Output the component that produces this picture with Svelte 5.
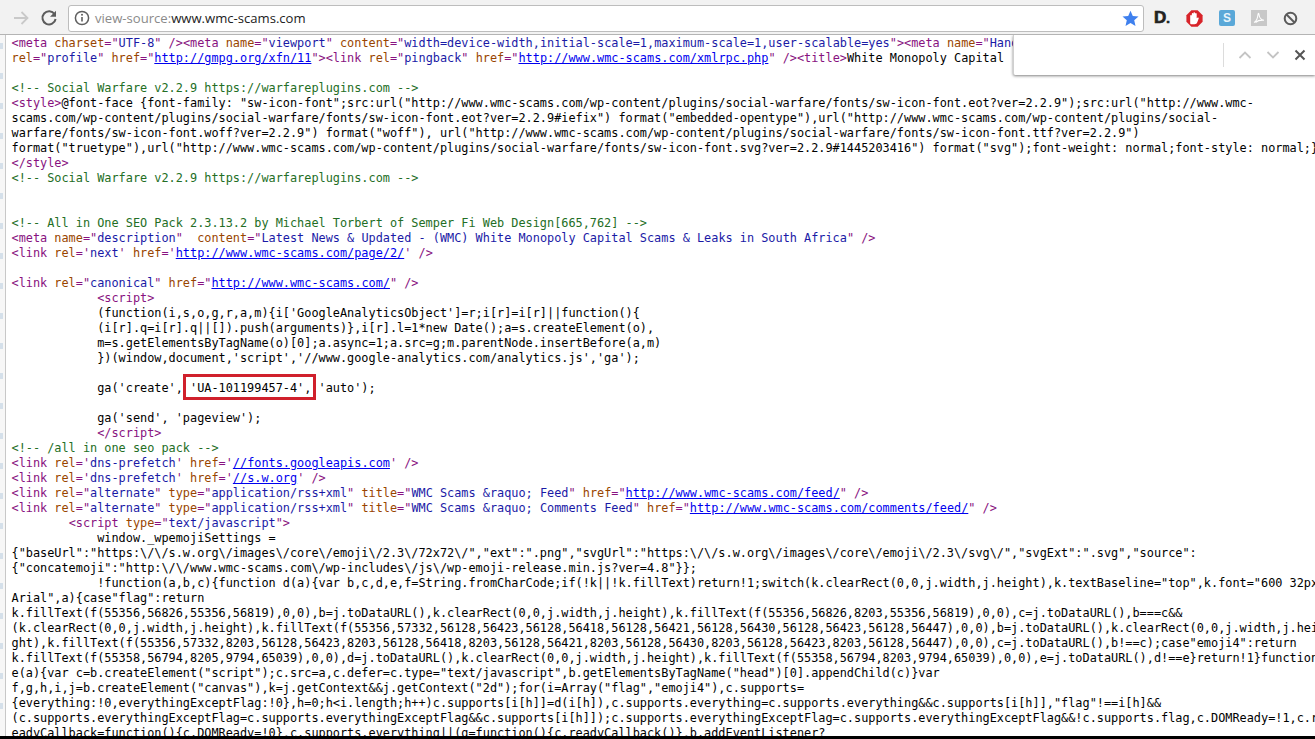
<script>
  const endScript = '<' + '/script>';
  const endStyle = '<' + '/style>';
  const MARK = " 'UA-101199457-4',";

  const source = String.raw`<meta charset="UTF-8" /><meta name="viewport" content="width=device-width,initial-scale=1,maximum-scale=1,user-scalable=yes"><meta name="HandheldFriendly" content="True">
rel="profile" href="http://gmpg.org/xfn/11"><link rel="pingback" href="http://www.wmc-scams.com/xmlrpc.php" /><title>White Monopoly Capital

<!-- Social Warfare v2.2.9 https://warfareplugins.com -->
<style>@font-face {font-family: "sw-icon-font";src:url("http://www.wmc-scams.com/wp-content/plugins/social-warfare/fonts/sw-icon-font.eot?ver=2.2.9");src:url("http://www.wmc-
scams.com/wp-content/plugins/social-warfare/fonts/sw-icon-font.eot?ver=2.2.9#iefix") format("embedded-opentype"),url("http://www.wmc-scams.com/wp-content/plugins/social-
warfare/fonts/sw-icon-font.woff?ver=2.2.9") format("woff"), url("http://www.wmc-scams.com/wp-content/plugins/social-warfare/fonts/sw-icon-font.ttf?ver=2.2.9")
format("truetype"),url("http://www.wmc-scams.com/wp-content/plugins/social-warfare/fonts/sw-icon-font.svg?ver=2.2.9#1445203416") format("svg");font-weight: normal;font-style: normal;}
${endStyle}
<!-- Social Warfare v2.2.9 https://warfareplugins.com -->


<!-- All in One SEO Pack 2.3.13.2 by Michael Torbert of Semper Fi Web Design[665,762] -->
<meta name="description"  content="Latest News & Updated - (WMC) White Monopoly Capital Scams & Leaks in South Africa" />
<link rel='next' href='http://www.wmc-scams.com/page/2/' />

<link rel="canonical" href="http://www.wmc-scams.com/" />
            <script>
            (function(i,s,o,g,r,a,m){i['GoogleAnalyticsObject']=r;i[r]=i[r]||function(){
            (i[r].q=i[r].q||[]).push(arguments)},i[r].l=1*new Date();a=s.createElement(o),
            m=s.getElementsByTagName(o)[0];a.async=1;a.src=g;m.parentNode.insertBefore(a,m)
            })(window,document,'script','//www.google-analytics.com/analytics.js','ga');

            ga('create', 'UA-101199457-4', 'auto');

            ga('send', 'pageview');
            ${endScript}
<!-- /all in one seo pack -->
<link rel='dns-prefetch' href='//fonts.googleapis.com' />
<link rel='dns-prefetch' href='//s.w.org' />
<link rel="alternate" type="application/rss+xml" title="WMC Scams &raquo; Feed" href="http://www.wmc-scams.com/feed/" />
<link rel="alternate" type="application/rss+xml" title="WMC Scams &raquo; Comments Feed" href="http://www.wmc-scams.com/comments/feed/" />
        <script type="text/javascript">
            window._wpemojiSettings =
{"baseUrl":"https:\/\/s.w.org\/images\/core\/emoji\/2.3\/72x72\/","ext":".png","svgUrl":"https:\/\/s.w.org\/images\/core\/emoji\/2.3\/svg\/","svgExt":".svg","source":
{"concatemoji":"http:\/\/www.wmc-scams.com\/wp-includes\/js\/wp-emoji-release.min.js?ver=4.8"}};
            !function(a,b,c){function d(a){var b,c,d,e,f=String.fromCharCode;if(!k||!k.fillText)return!1;switch(k.clearRect(0,0,j.width,j.height),k.textBaseline="top",k.font="600 32px
Arial",a){case"flag":return
k.fillText(f(55356,56826,55356,56819),0,0),b=j.toDataURL(),k.clearRect(0,0,j.width,j.height),k.fillText(f(55356,56826,8203,55356,56819),0,0),c=j.toDataURL(),b===c&&
(k.clearRect(0,0,j.width,j.height),k.fillText(f(55356,57332,56128,56423,56128,56418,56128,56421,56128,56430,56128,56423,56128,56447),0,0),b=j.toDataURL(),k.clearRect(0,0,j.width,j.hei
ght),k.fillText(f(55356,57332,8203,56128,56423,8203,56128,56418,8203,56128,56421,8203,56128,56430,8203,56128,56423,8203,56128,56447),0,0),c=j.toDataURL(),b!==c);case"emoji4":return
k.fillText(f(55358,56794,8205,9794,65039),0,0),d=j.toDataURL(),k.clearRect(0,0,j.width,j.height),k.fillText(f(55358,56794,8203,9794,65039),0,0),e=j.toDataURL(),d!==e}return!1}function
e(a){var c=b.createElement("script");c.src=a,c.defer=c.type="text/javascript",b.getElementsByTagName("head")[0].appendChild(c)}var
f,g,h,i,j=b.createElement("canvas"),k=j.getContext&&j.getContext("2d");for(i=Array("flag","emoji4"),c.supports=
{everything:!0,everythingExceptFlag:!0},h=0;h<i.length;h++)c.supports[i[h]]=d(i[h]),c.supports.everything=c.supports.everything&&c.supports[i[h]],"flag"!==i[h]&&
(c.supports.everythingExceptFlag=c.supports.everythingExceptFlag&&c.supports[i[h]]);c.supports.everythingExceptFlag=c.supports.everythingExceptFlag&&!c.supports.flag,c.DOMReady=!1,c.r
eadyCallback=function(){c.DOMReady=!0},c.supports.everything||(g=function(){c.readyCallback()},b.addEventListener?`.split('\n');

  // same colouring as the browser's view-source page
  function parseTag(tag) {
    const out = [];
    const re = /([\w-]+)=(["'])(.*?)\2/g;
    let last = 0;
    let m;
    while ((m = re.exec(tag))) {
      out.push({ kind: 'tag', text: tag.slice(last, m.index) });
      out.push({ kind: 'attr', text: m[1] });
      out.push({ kind: 'tag', text: '=' + m[2] });
      const isLink = m[1] === 'href' && /^(http|\/\/)/.test(m[3]);
      out.push({ kind: isLink ? 'link' : 'value', text: m[3] });
      out.push({ kind: 'tag', text: m[2] });
      last = m.index + m[0].length;
    }
    out.push({ kind: 'tag', text: tag.slice(last) });
    return out;
  }

  function parseLine(line) {
    const out = [];
    // ^rel= is the tail of a tag wrapped from the line above
    const re = /<!--.*?-->|<[^>]*>|^rel=[^>]*>/g;
    let last = 0;
    let m;
    const plain = (text) => {
      const at = text.indexOf(MARK);
      if (at < 0) {
        if (text) out.push({ kind: 'plain', text });
        return;
      }
      out.push({ kind: 'plain', text: text.slice(0, at) });
      out.push({ kind: 'mark', text: MARK });
      out.push({ kind: 'plain', text: text.slice(at + MARK.length) });
    };
    while ((m = re.exec(line))) {
      plain(line.slice(last, m.index));
      if (m[0].startsWith('<!--')) out.push({ kind: 'comment', text: m[0] });
      else out.push(...parseTag(m[0]));
      last = m.index + m[0].length;
    }
    plain(line.slice(last));
    return out;
  }

  const lines = source.map(parseLine);
  const ticks = [0, 1, 2, 3, 4, 5, 6, 7, 8, 9, 10, 11, 12, 13, 14, 15, 16, 17, 18, 19, 20, 21, 22];
</script>

<div class="page">
  <header class="toolbar">
    <div class="nav">
      <svg class="arrow" width="18" height="18" viewBox="0 0 18 18" fill="none" stroke="#c9c9c9" stroke-width="1.8">
        <path d="M2 9h13.5M9.5 3l6 6-6 6" />
      </svg>
      <svg class="reload" width="18" height="18" viewBox="0 0 18 18" fill="none">
        <path d="M14.6 5.2A6.6 6.6 0 1 0 15.6 10" stroke="#5c5c5c" stroke-width="2" />
        <path d="M16 1.8v6h-6z" fill="#5c5c5c" />
      </svg>
    </div>
    <div class="omnibox">
      <svg width="16" height="16" viewBox="0 0 16 16" fill="none">
        <circle cx="8" cy="8" r="6.6" stroke="#5f5f5f" stroke-width="1.5" />
        <path d="M8 7v4.6" stroke="#5f5f5f" stroke-width="1.6" />
        <circle cx="8" cy="4.8" r="1" fill="#5f5f5f" />
      </svg>
      <span class="url"><span class="scheme">view-source:</span>www.wmc-scams.com</span>
      <svg class="star" width="17" height="17" viewBox="0 0 17 17">
        <path d="M8.5.8l2.3 5.2 5.7.5-4.3 3.8 1.3 5.6-5-3-5 3 1.3-5.6L.5 6.500l5.700-.5z" fill="#3f80ee" />
      </svg>
    </div>
    <div class="extensions">
      <span class="ext-d">D<small>.</small></span>
      <svg width="17" height="17" viewBox="0 0 17 17">
        <path d="M5.400.3h6.200l5 5v6.400l-5 5H5.400l-5-5V5.300z" fill="#d8242a" />
        <path d="M4.200 13V5.800c0-1.200 1.600-1.200 1.600 0V3.900c0-1.200 1.600-1.200 1.600 0v-.8c0-1.200 1.700-1.200 1.700 0v.8c0-1.200 1.600-1.200 1.600 0v4.300c.9-1.200 2.300-.8 2 .4l-1.300 3.400c-.6 1.300-1.400 2.300-3 2.300H6.600c-1.400 0-2.400-.4-2.400-.9z" fill="#fff" />
      </svg>
      <span class="ext-s">S</span>
      <span class="ext-pdf">
        <svg width="12" height="12" viewBox="0 0 12 12" fill="none" stroke="#fff" stroke-width="1.100">
          <path d="M1 10.500c2-1 3.700-4.500 4-8 .1-1.500.9-1.500 1 0 .3 3 2.500 5.500 5 5.700-3-.2-6.500.5-8.500 2.300" />
        </svg>
      </span>
      <svg width="15" height="15" viewBox="0 0 15 15" fill="none" stroke="#5b5b5b" stroke-width="2">
        <circle cx="7.500" cy="7.500" r="5.800" />
        <path d="M3.500 3.500l8 8" />
      </svg>
    </div>
  </header>

  <main class="view">
    <div class="gutter">
      {#each ticks as tick (tick)}
        <i class="tick"></i>
      {/each}
    </div>
    <div class="code">
      {#each lines as line, i (i)}
        <div class="line">{#each line as seg}<span class={seg.kind}>{seg.text}</span>{/each}</div>
      {/each}
    </div>

    <div class="findbar">
      <span class="find-input"></span>
      <svg width="14" height="10" viewBox="0 0 14 10" fill="none" stroke="#c4c4c4" stroke-width="1.800">
        <path d="M1.500 8L7 2.500 12.500 8" />
      </svg>
      <svg width="14" height="10" viewBox="0 0 14 10" fill="none" stroke="#c4c4c4" stroke-width="1.800">
        <path d="M1.500 2L7 7.500 12.500 2" />
      </svg>
      <svg width="12" height="12" viewBox="0 0 12 12" fill="none" stroke="#555" stroke-width="2">
        <path d="M1.500 1.500l9 9M10.500 1.500l-9 9" />
      </svg>
    </div>
  </main>
  <div class="baseline"></div>
</div>

<style>
  :global(body) {
    margin: 0;
  }

  .page {
    width: 1315px;
    height: 739px;
    display: flex;
    flex-direction: column;
    overflow: hidden;
    background: #fff;
  }

  .toolbar {
    height: 35px;
    box-sizing: border-box;
    padding-top: 2px;
    flex-shrink: 0;
    display: flex;
    align-items: center;
    background: #f2f2f2;
    border-bottom: 1px solid #b4b4b4;
  }

  .nav {
    width: 68px;
    display: flex;
    align-items: center;
    gap: 10px;
    padding-left: 12px;
    box-sizing: border-box;
  }

  .omnibox {
    width: 1076px;
    height: 27px;
    box-sizing: border-box;
    display: flex;
    align-items: center;
    gap: 5px;
    padding: 0 4px 0 5px;
    background: #fff;
    border: 1px solid #bdbdbd;
    border-radius: 3px;
  }

  .url {
    flex: 1;
    font-family: "Open Sans", sans-serif;
    font-size: 13.100px;
    color: #222;
  }

  .scheme {
    color: #8a8a8a;
  }

  .extensions {
    flex: 1;
    display: flex;
    align-items: center;
    justify-content: space-between;
    padding: 0 17px 0 10px;
  }

  .ext-d {
    font-family: "Liberation Sans", sans-serif;
    font-weight: 700;
    font-size: 17px;
    -webkit-text-stroke: 0.7px #222;
    color: #222;
  }

  .ext-d small {
    font-size: 13px;
  }

  .ext-s {
    width: 16px;
    height: 16px;
    display: flex;
    align-items: center;
    justify-content: center;
    background: #5aa8d8;
    border-radius: 2px;
    font-family: "Liberation Sans", sans-serif;
    font-weight: 700;
    font-size: 12px;
    color: #e8f4fb;
  }

  .ext-pdf {
    width: 16px;
    height: 16px;
    display: flex;
    align-items: center;
    justify-content: center;
    background: #c8c8c8;
  }

  .view {
    position: relative;
    flex: 1;
    min-height: 0;
    display: flex;
    overflow: hidden;
  }

  .gutter {
    width: 5px;
    flex-shrink: 0;
    display: flex;
    flex-direction: column;
    gap: 24px;
    padding-top: 8px;
    border-right: 1px solid #c8c8c8;
    background: #f7f7f7;
  }

  .tick {
    display: block;
    width: 3px;
    height: 6px;
    background: #d5e0ea;
  }

  .code {
    padding: 1px 0 0 5.500px;
    font-family: "DejaVu Sans Mono", monospace;
    font-size: 11.860px;
    line-height: 15px;
    white-space: pre;
    color: #000;
  }

  .line {
    height: 15px;
  }

  .tag {
    color: #881280;
  }

  .attr {
    color: #994500;
  }

  .value {
    color: #1a1aa6;
  }

  .comment {
    color: #236e25;
  }

  .link {
    color: #0000ee;
    text-decoration: underline;
  }

  .mark {
    position: relative;
  }

  /* red annotation box drawn over the code */
  .mark::after {
    content: '';
    position: absolute;
    left: 0;
    right: -5px;
    top: -7px;
    bottom: -5px;
    border: 3px solid #d0202c;
  }

  .findbar {
    position: absolute;
    top: 0;
    right: 0;
    width: 302px;
    height: 40px;
    box-sizing: border-box;
    display: flex;
    align-items: center;
    gap: 14px;
    padding-right: 9px;
    background: #fff;
    border-left: 1px solid #cfcfcf;
    border-radius: 0 0 0 2px;
    box-shadow: 0 1px 3px rgba(0, 0, 0, 0.5);
  }

  .find-input {
    flex: 1;
    height: 24px;
    border-right: 1px solid #dcdcdc;
  }

  .baseline {
    height: 3px;
    flex-shrink: 0;
    background: #000;
  }
</style>
